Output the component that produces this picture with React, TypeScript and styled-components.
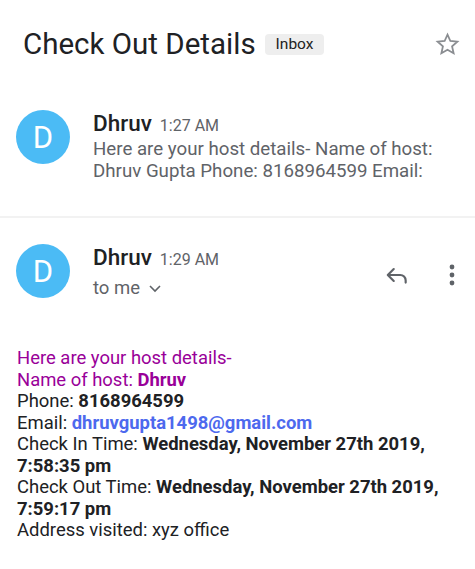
import React from "react";
import styled, { createGlobalStyle } from "styled-components";

const Global = createGlobalStyle`
  html, body { margin: 0; padding: 0; background: #fff; }
  body { font-family: Roboto, "Noto Sans", Arial, sans-serif; -webkit-font-smoothing: antialiased; }
`;

const Page = styled.div`
  width: 475px;
  height: 569px;
  overflow: hidden;
  background: #fff;
  display: flex;
  flex-direction: column;
`;

const Header = styled.div`
  display: flex;
  align-items: center;
  padding: 25px 13px 0 23px;
  height: 38px;
`;

const Title = styled.h1`
  margin: 0;
  font-size: 29.5px;
  font-weight: 400;
  color: #202124;
  letter-spacing: 0;
`;

const Badge = styled.span`
  margin-left: 9px;
  background: #eeeeee;
  color: #222;
  font-size: 15.5px;
  border-radius: 4px;
  padding: 2px 11px;
  line-height: 17px;
`;

const Spacer = styled.div`
  flex: 1;
`;

const IconBtn = styled.div<{ $w?: number }>`
  width: ${(p) => p.$w ?? 26}px;
  display: flex;
  align-items: center;
  justify-content: center;
  color: #5f6368;
`;

const MessageRow = styled.div<{ $top: number }>`
  display: flex;
  align-items: flex-start;
  padding: ${(p) => p.$top}px 16px 0 16px;
`;

const Avatar = styled.div`
  width: 54px;
  height: 54px;
  border-radius: 50%;
  background: #4bbbf5;
  color: #fff;
  font-size: 31px;
  display: flex;
  align-items: center;
  justify-content: center;
  flex-shrink: 0;
`;

const MsgMain = styled.div`
  margin-left: 23px;
  flex: 1;
  min-width: 0;
`;

const NameLine = styled.div`
  display: flex;
  align-items: baseline;
  gap: 8px;
  line-height: 26px;
`;

const Name = styled.span`
  font-size: 22.5px;
  color: #202124;
  font-weight: 500;
`;

const Time = styled.span`
  font-size: 16px;
  color: #5f6368;
`;

const Snippet = styled.div`
  font-size: 18.7px;
  line-height: 22px;
  color: #5f6368;
  margin-top: -1px;
`;

const ToMe = styled.div`
  font-size: 18.5px;
  color: #5f6368;
  margin-top: 4px;
  display: flex;
  align-items: center;
  gap: 8px;
`;

const Divider = styled.div`
  height: 2px;
  background: #f2f2f2;
  margin-top: 34px;
`;

const Actions = styled.div`
  display: flex;
  align-items: center;
  gap: 35px;
  margin-top: 18px;
`;

const Body = styled.div`
  padding: 49px 16px 0 17px;
  font-size: 18.45px;
  line-height: 21.5px;
  color: #202124;
`;

const Line = styled.div<{ $purple?: boolean }>`
  color: ${(p) => (p.$purple ? "#990099" : "#202124")};
`;

const B = styled.b`
  font-weight: 700;
`;

const Link = styled.span`
  color: #4d69ee;
  font-weight: 700;
`;

const Star = () => (
  <svg width="27" height="27" viewBox="0 0 24 24" fill="none">
    <path
      d="M12 3.2l2.55 5.7 6.2.6-4.67 4.15 1.35 6.1L12 16.6l-5.43 3.15 1.35-6.1L3.25 9.5l6.2-.6z"
      stroke="#8a8d91"
      strokeWidth="1.6"
      strokeLinejoin="miter"
    />
  </svg>
);

const Reply = () => (
  <svg width="26" height="26" viewBox="0 0 24 24">
    <path
      d="M9 6.5L3.5 12 9 17.5M4 12h11a5 5 0 0 1 5 5v2"
      stroke="#5f6368"
      strokeWidth="2"
      fill="none"
      strokeLinecap="round"
      strokeLinejoin="round"
    />
  </svg>
);

const Dots = () => (
  <svg width="8" height="24" viewBox="0 0 8 24">
    <circle cx="4" cy="4" r="2.4" fill="#5f6368" />
    <circle cx="4" cy="12" r="2.4" fill="#5f6368" />
    <circle cx="4" cy="20" r="2.4" fill="#5f6368" />
  </svg>
);

const Chevron = () => (
  <svg width="14" height="9" viewBox="0 0 14 9">
    <path d="M2 2l5 5 5-5" stroke="#5f6368" strokeWidth="1.6" fill="none" />
  </svg>
);

export default function App() {
  return (
    <Page>
      <Global />
      <Header>
        <Title>Check Out Details</Title>
        <Badge>Inbox</Badge>
        <Spacer />
        <IconBtn $w={30}>
          <Star />
        </IconBtn>
      </Header>

      <MessageRow $top={47}>
        <Avatar>D</Avatar>
        <MsgMain>
          <NameLine>
            <Name>Dhruv</Name>
            <Time>1:27 AM</Time>
          </NameLine>
          <Snippet>
            Here are your host details- Name of host: Dhruv Gupta Phone: 8168964599 Email:
          </Snippet>
        </MsgMain>
      </MessageRow>

      <Divider />

      <MessageRow $top={26}>
        <Avatar>D</Avatar>
        <MsgMain>
          <NameLine>
            <Name>Dhruv</Name>
            <Time>1:29 AM</Time>
          </NameLine>
          <ToMe>
            to me <Chevron />
          </ToMe>
        </MsgMain>
        <Actions>
          <IconBtn $w={26}>
            <Reply />
          </IconBtn>
          <IconBtn $w={14}>
            <Dots />
          </IconBtn>
        </Actions>
      </MessageRow>

      <Body>
        <Line $purple>Here are your host details-</Line>
        <Line $purple>
          Name of host: <B>Dhruv</B>
        </Line>
        <Line>
          Phone: <B>8168964599</B>
        </Line>
        <Line>
          Email: <Link>dhruvgupta1498@gmail.com</Link>
        </Line>
        <Line>
          Check In Time: <B>Wednesday, November 27th 2019, 7:58:35 pm</B>
        </Line>
        <Line>
          Check Out Time: <B>Wednesday, November 27th 2019, 7:59:17 pm</B>
        </Line>
        <Line>Address visited: xyz office</Line>
      </Body>
    </Page>
  );
}
